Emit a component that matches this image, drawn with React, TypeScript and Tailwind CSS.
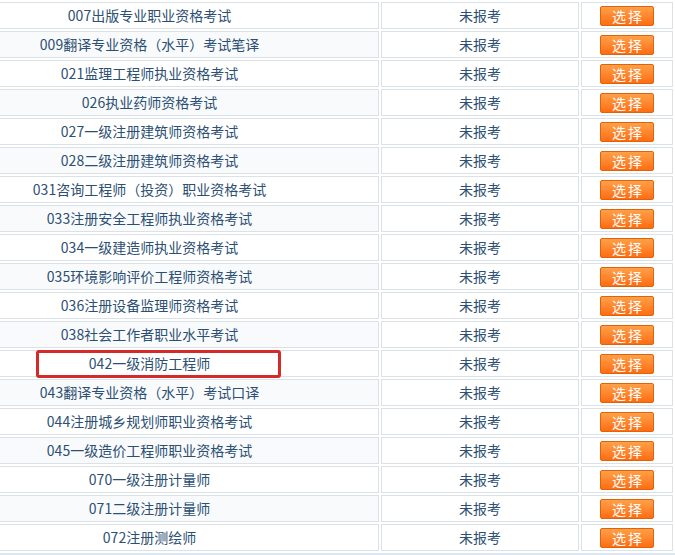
const EXAMS = [
  '007出版专业职业资格考试',
  '009翻译专业资格（水平）考试笔译',
  '021监理工程师执业资格考试',
  '026执业药师资格考试',
  '027一级注册建筑师资格考试',
  '028二级注册建筑师资格考试',
  '031咨询工程师（投资）职业资格考试',
  '033注册安全工程师执业资格考试',
  '034一级建造师执业资格考试',
  '035环境影响评价工程师资格考试',
  '036注册设备监理师资格考试',
  '038社会工作者职业水平考试',
  '042一级消防工程师',
  '043翻译专业资格（水平）考试口译',
  '044注册城乡规划师职业资格考试',
  '045一级造价工程师职业资格考试',
  '070一级注册计量师',
  '071二级注册计量师',
  '072注册测绘师',
];

export default function App() {
  return (
    <div
      className="relative h-[555px] w-[675px] overflow-hidden bg-white text-[14px] text-[#2c4f72]"
      style={{ fontFamily: '"SimSun", "Noto Sans CJK SC", sans-serif' }}
    >
      <table className="ml-[-82px] w-[757px] table-fixed border-separate border-spacing-[2px]">
        <colgroup>
          <col className="w-[459px]" />
          <col className="w-[198px]" />
          <col className="w-[92px]" />
        </colgroup>
        <tbody>
          {EXAMS.map((name, i) => (
            <tr key={name} className="h-[27px]">
              <td className={`border border-[#dae1e7] p-0 text-center leading-[25px] ${i % 2 === 1 ? 'bg-[#f8fafc]' : 'bg-white'}`}>
                {name}
              </td>
              <td className="border border-[#dae1e7] bg-white p-0 text-center leading-[25px]">未报考</td>
              <td className="border border-[#dae1e7] bg-white p-0 text-center">
                <button
                  type="button"
                  className="mx-auto flex h-[20px] w-[54px] items-center justify-center rounded-[2px] border border-[#e2620c] bg-gradient-to-b from-[#ffa046] to-[#ff6c0c] pl-[2px] text-[14px] leading-none tracking-[2px] text-white"
                >
                  选择
                </button>
              </td>
            </tr>
          ))}
        </tbody>
      </table>
      <div className="h-[3px] bg-[#dbe6f0]" />

      {/* annotation box */}
      <div className="absolute left-[36px] top-[350px] h-[28px] w-[245px] rounded-[3px] border-[3px] border-[#d52a2a]" />
    </div>
  );
}
